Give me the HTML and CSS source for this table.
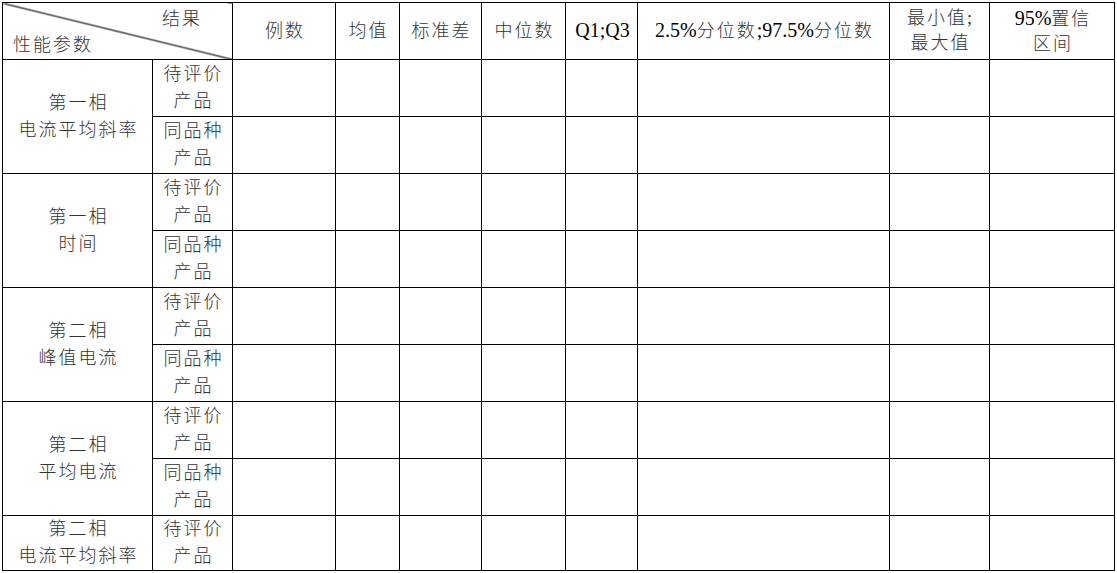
FILE: index.html
```html
<!DOCTYPE html>
<html lang="zh">
<head>
<meta charset="utf-8">
<link rel="stylesheet" href="styles.css">
</head>
<body>
<table class="grid">
  <colgroup>
    <col class="c1"><col class="c2"><col class="c3"><col class="c4"><col class="c5">
    <col class="c6"><col class="c7"><col class="c8"><col class="c9"><col class="c10">
  </colgroup>
  <tr class="head">
    <td colspan="2" class="diag">
      <div class="d-top">结果</div>
      <div class="d-bot">性能参数</div>
    </td>
    <td>例数</td>
    <td>均值</td>
    <td>标准差</td>
    <td>中位数</td>
    <td><span class="lat">Q1;Q3</span></td>
    <td><span class="lat">2.5%</span>分位数<span class="lat">;97.5%</span>分位数</td>
    <td>最小值;<br>最大值</td>
    <td><span class="lat">95%</span>置信<br>区间</td>
  </tr>
  <tr class="r">
    <td rowspan="2">第一相<br>电流平均斜率</td>
    <td>待评价<br>产品</td>
    <td></td><td></td><td></td><td></td><td></td><td></td><td></td><td></td>
  </tr>
  <tr class="r">
    <td>同品种<br>产品</td>
    <td></td><td></td><td></td><td></td><td></td><td></td><td></td><td></td>
  </tr>
  <tr class="r">
    <td rowspan="2">第一相<br>时间</td>
    <td>待评价<br>产品</td>
    <td></td><td></td><td></td><td></td><td></td><td></td><td></td><td></td>
  </tr>
  <tr class="r">
    <td>同品种<br>产品</td>
    <td></td><td></td><td></td><td></td><td></td><td></td><td></td><td></td>
  </tr>
  <tr class="r">
    <td rowspan="2">第二相<br>峰值电流</td>
    <td>待评价<br>产品</td>
    <td></td><td></td><td></td><td></td><td></td><td></td><td></td><td></td>
  </tr>
  <tr class="r">
    <td>同品种<br>产品</td>
    <td></td><td></td><td></td><td></td><td></td><td></td><td></td><td></td>
  </tr>
  <tr class="r">
    <td rowspan="2">第二相<br>平均电流</td>
    <td>待评价<br>产品</td>
    <td></td><td></td><td></td><td></td><td></td><td></td><td></td><td></td>
  </tr>
  <tr class="r">
    <td>同品种<br>产品</td>
    <td></td><td></td><td></td><td></td><td></td><td></td><td></td><td></td>
  </tr>
  <tr class="r last">
    <td>第二相<br>电流平均斜率</td>
    <td>待评价<br>产品</td>
    <td></td><td></td><td></td><td></td><td></td><td></td><td></td><td></td>
  </tr>
</table>
</body>
</html>
```
FILE: styles.css
```css
html, body {
  margin: 0;
  padding: 0;
  background: #fff;
}
body {
  padding: 2px 0 0 2px;
}
.grid {
  border-collapse: collapse;
  table-layout: fixed;
  width: 1113px;
  font-family: "Liberation Serif", "Noto Sans CJK SC", serif;
  font-size: 18px;
  font-weight: 300;
  color: #333;
  letter-spacing: 2px;
}
.c1 { width: 150px; }
.c2 { width: 80px; }
.c3 { width: 103px; }
.c4 { width: 64px; }
.c5 { width: 82px; }
.c6 { width: 84px; }
.c7 { width: 72px; }
.c8 { width: 252px; }
.c9 { width: 100px; }
.c10 { width: 125px; }
.grid td {
  border: 1px solid #000;
  padding: 0 0 0 2px;
  text-align: center;
  vertical-align: middle;
  line-height: 27px;
  overflow: hidden;
  white-space: nowrap;
}
.head { height: 57px; }
.head td { line-height: 25px; }
.r { height: 57px; }
.r.last { height: 55px; }
.lat {
  font-size: 20px;
  letter-spacing: 0;
  color: #000;
  font-weight: 400;
}
.grid td.diag {
  padding: 0;
  vertical-align: top;
  background: linear-gradient(to top right, transparent calc(50% - 1.1px), #000 50%, transparent calc(50% + 1.1px));
}
.d-top {
  text-align: right;
  padding: 3px 30px 0 0;
  line-height: 26px;
}
.d-bot {
  text-align: left;
  padding-left: 10px;
  line-height: 26px;
}
```
